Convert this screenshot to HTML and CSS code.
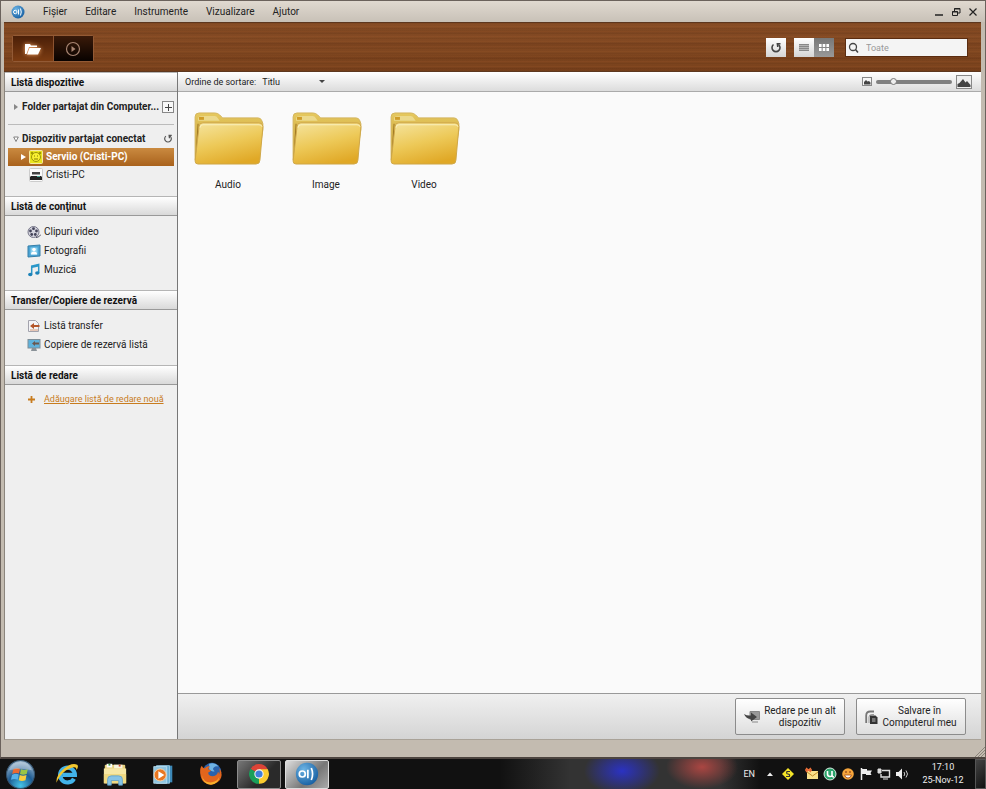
FILE: index.html
```
<!DOCTYPE html>
<html lang="ro">
<head>
    <meta charset="UTF-8">
    <meta name="viewport" content="width=device-width, initial-scale=1.0">
    <title>AllShare</title>
    <link rel="stylesheet" href="styles.css">
</head>
<body>
    <svg class="defs" aria-hidden="true">
        <defs>
            <linearGradient id="folderFront" x1="0.2" y1="0" x2="0.6" y2="1">
                <stop offset="0" stop-color="#f4e196"/>
                <stop offset="0.5" stop-color="#edc958"/>
                <stop offset="1" stop-color="#e0a826"/>
            </linearGradient>
            <linearGradient id="folderBack" x1="0" y1="0" x2="0" y2="1">
                <stop offset="0" stop-color="#e6c95f"/>
                <stop offset="1" stop-color="#bd912b"/>
            </linearGradient>
            <radialGradient id="orb" cx="0.5" cy="0.9" r="0.9">
                <stop offset="0" stop-color="#45c4e8"/>
                <stop offset="0.5" stop-color="#1e5c93"/>
                <stop offset="1" stop-color="#a9bfd2"/>
            </radialGradient>
            <radialGradient id="appBlue" cx="0.35" cy="0.3" r="0.8">
                <stop offset="0" stop-color="#6db4e4"/>
                <stop offset="1" stop-color="#125a9e"/>
            </radialGradient>
            <symbol id="folder" viewBox="0 0 72 56">
                <path d="M2 50V6q0-4 4-4h16q3 0 5 2l3 3h36q3 0 4 3l1 3v6L66 52H6z" fill="url(#folderBack)" stroke="#d3b45c"/>
                <path d="M5 8q0-3 3-3h14q2 0 3 2l2 3h-22z" fill="#ecd98b"/>
                <rect x="6" y="6" width="5" height="3" fill="#cf9c26"/>
                <path d="M3 48L5 13" stroke="#9a7321" fill="none"/>
                <path d="M6 16q0-4 4-4h57q4 0 4 4l-3 34q0 4-4 4H5q-3 0-3-3z" fill="url(#folderFront)" stroke="#cfa748"/>
                <path d="M7 17q0-3 3-3h57q3 0 3 2" fill="none" stroke="#faf0bd"/>
            </symbol>
            <symbol id="app" viewBox="0 0 28 28">
                <circle cx="14" cy="14" r="13" fill="url(#appBlue)"/>
                <circle cx="8.500" cy="14" r="3.500" fill="none" stroke="#fff" stroke-width="2"/>
                <path d="M15 9v10M19 7q3 7 0 14" fill="none" stroke="#fff" stroke-width="2"/>
            </symbol>
        </defs>
    </svg>

    <div class="window">
        <header class="titlebar">
            <svg class="app-logo"><use href="#app"/></svg>
            <nav class="menu">
                <button>Fişier</button>
                <button>Editare</button>
                <button>Instrumente</button>
                <button>Vizualizare</button>
                <button>Ajutor</button>
            </nav>
            <div class="window-buttons">
                <button aria-label="Minimizare"><svg viewBox="0 0 10 10"><path d="M1 8h8" stroke="#222" stroke-width="1.500"/></svg></button>
                <button aria-label="Restaurare"><svg viewBox="0 0 10 10"><path d="M3.500 4V1.500h5.500V6H7M3 2h6" fill="none" stroke="#222"/><path d="M1.500 4.500h5V8.500h-5zM1 5h6" fill="none" stroke="#222"/></svg></button>
                <button aria-label="Închidere"><svg viewBox="0 0 10 10"><path d="M1.500 1.500l7 7M8.500 1.500l-7 7" stroke="#222" stroke-width="1.200"/></svg></button>
            </div>
        </header>

        <div class="toolbar">
            <div class="mode-switch">
                <button class="active" aria-label="Foldere">
                    <svg width="18" height="14" viewBox="0 0 18 14"><path d="M1 12V2h5l1 1.500h6V5H5L2.500 12z" fill="#fff"/><path d="M5.500 6H17l-3 6.500H3z" fill="#fff"/></svg>
                </button>
                <button aria-label="Redare">
                    <svg width="16" height="16" viewBox="0 0 16 16"><circle cx="8" cy="8" r="6.500" fill="none" stroke="#a98673" stroke-width="1.200"/><path d="M6.500 5v6l4-3z" fill="#a98673"/></svg>
                </button>
            </div>
            <button class="tool-btn" aria-label="Reîmprospătare">
                <svg width="12" height="12" viewBox="0 0 12 12"><path d="M3.500 2.500A4 4 0 1 0 8.500 2.500" fill="none" stroke="#444" stroke-width="1.600"/><path d="M6.500 1h4v1.500h-2V5H7z" fill="#444"/></svg>
            </button>
            <div class="view-switch">
                <button aria-label="Listă"><svg width="10" height="7" viewBox="0 0 10 7"><path d="M0 0h10v7H0z" fill="#b5b5b5"/><path d="M0 .5h10M0 2.500h10M0 4.500h10M0 6.500h10" stroke="#888"/></svg></button>
                <button class="active" aria-label="Pictograme"><svg width="10" height="7" viewBox="0 0 10 7"><path d="M0 0h2.600v3H0zM3.700 0h2.600v3H3.700zM7.400 0H10v3H7.400zM0 4h2.600v3H0zM3.700 4h2.600v3H3.700zM7.400 4H10v3H7.400z" fill="#fff"/></svg></button>
            </div>
            <label class="search">
                <svg width="12" height="12" viewBox="0 0 12 12"><circle cx="5" cy="5" r="3.500" fill="none" stroke="#444" stroke-width="1.300"/><path d="M7.500 7.500L10 10.500" stroke="#444" stroke-width="1.500"/></svg>
                <input type="text" placeholder="Toate" aria-label="Căutare">
            </label>
        </div>

        <div class="content">
            <aside class="sidebar">
                <h2>Listă dispozitive</h2>
                <div class="devices">
                    <div class="group">
                        <svg class="arrow" viewBox="0 0 6 8"><path d="M1 1l4 3-4 3z" fill="#888"/></svg>
                        <span>Folder partajat din Computer...</span>
                        <button class="add" aria-label="Adăugare folder"><svg width="7" height="7" viewBox="0 0 7 7"><path d="M3.500 0v7M0 3.500h7" stroke="#444"/></svg></button>
                    </div>
                    <hr>
                    <div class="group">
                        <svg class="arrow" viewBox="0 0 6 8"><path d="M.7 2h4.600L3 6.500z" fill="#fff" stroke="#666" stroke-width=".8"/></svg>
                        <span>Dispozitiv partajat conectat</span>
                        <button class="reload" aria-label="Reîmprospătare"><svg width="10" height="10" viewBox="0 0 12 12"><path d="M3.500 2.500A4 4 0 1 0 8.500 2.500" fill="none" stroke="#555" stroke-width="1.400"/><path d="M6.500 1h4v1.500h-2V5H7z" fill="#555"/></svg></button>
                    </div>
                    <a href="#" class="device selected">
                        <svg class="arrow" viewBox="0 0 6 8"><path d="M1 1l5 3-5 3z" fill="#fff"/></svg>
                        <svg class="icon" viewBox="0 0 14 14"><rect x=".5" y=".5" width="13" height="13" rx="1" fill="#e9e51d" stroke="#f6e8a0"/><circle cx="7" cy="7" r="4.500" fill="#f9f032" stroke="#9c950c"/><circle cx="3" cy="3" r="1.300" fill="#a39b00"/><circle cx="11" cy="3" r="1.300" fill="#a39b00"/><path d="M5 6h1M8 6h1M5 9h4" stroke="#857c00"/></svg>
                        <span>Serviio (Cristi-PC)</span>
                    </a>
                    <a href="#" class="device">
                        <svg class="arrow"></svg>
                        <svg class="icon" viewBox="0 0 14 14"><rect x=".5" y=".5" width="13" height="13" rx="1" fill="#fafafa" stroke="#ccc"/><path d="M3 4h8v2.500H3z" fill="#444"/><path d="M2 8h10l1 1v3H1V9z" fill="#222"/><path d="M8 8.500h3" stroke="#4a9"/></svg>
                        <span>Cristi-PC</span>
                    </a>
                </div>

                <h2>Listă de conţinut</h2>
                <ul>
                    <li><a href="#">
                        <svg class="icon" viewBox="0 0 14 14"><circle cx="6.500" cy="7" r="5.500" fill="#d5d5df" stroke="#77778a"/><circle cx="6.500" cy="3.700" r="1.400" fill="#44445a"/><circle cx="3.500" cy="6" r="1.400" fill="#44445a"/><circle cx="9.500" cy="6" r="1.400" fill="#44445a"/><circle cx="4.700" cy="9.500" r="1.400" fill="#44445a"/><circle cx="8.300" cy="9.500" r="1.400" fill="#44445a"/><path d="M9 12.500q3 0 5-3" stroke="#44445a" fill="none"/></svg>
                        Clipuri video</a></li>
                    <li><a href="#">
                        <svg class="icon" viewBox="0 0 14 14"><path d="M1 2l12-1v11l-12 1z" fill="#4ba3d3" stroke="#357fa9"/><path d="M3.500 3.500h7v7h-7z" fill="#8bd0ee"/><circle cx="7" cy="5.500" r="1.800" fill="#fff"/><path d="M4 10.500q0-3 3-3t3 3z" fill="#fff"/></svg>
                        Fotografii</a></li>
                    <li><a href="#">
                        <svg class="icon" viewBox="0 0 14 14"><path d="M4.700 11V3l7-1.500V10" fill="none" stroke="#2a97c8" stroke-width="1.500"/><path d="M4.700 4l7-1.500" stroke="#2a97c8" stroke-width="2"/><ellipse cx="3.300" cy="11.500" rx="2.200" ry="1.700" fill="#1c82b8"/><ellipse cx="10.300" cy="10" rx="2.200" ry="1.700" fill="#1c82b8"/></svg>
                        Muzică</a></li>
                </ul>

                <h2>Transfer/Copiere de rezervă</h2>
                <ul>
                    <li><a href="#">
                        <svg class="icon" viewBox="0 0 14 14"><path d="M1.500 1.500h7l3 3v8h-10z" fill="#f3f3f6" stroke="#a3a3ad"/><path d="M12.500 6H7V4L3 7l4 3V8h5.500z" fill="#b4562a"/><path d="M3 11h8" stroke="#d99a77"/></svg>
                        Listă transfer</a></li>
                    <li><a href="#">
                        <svg class="icon" viewBox="0 0 14 14"><rect x="1" y="1.500" width="12" height="8.500" fill="#5fb2dc" stroke="#7e8e98"/><path d="M4 13h6l-1-3H5z" fill="#8a9298"/><path d="M12 4.500H8V3L5 5.500l3 2.500V6.500h4z" fill="#6a5850"/></svg>
                        Copiere de rezervă listă</a></li>
                </ul>

                <h2>Listă de redare</h2>
                <ul>
                    <li><a href="#" class="new-playlist">
                        <svg class="plus" viewBox="0 0 7 7"><path d="M3.500 0v7M0 3.500h7" stroke="#c87c1e" stroke-width="1.800"/></svg>
                        <span>Adăugare listă de redare nouă</span></a></li>
                </ul>
            </aside>

            <main>
                <div class="sortbar">
                    <label for="sort">Ordine de sortare:</label>
                    <div class="select">
                        <select id="sort"><option>Titlu</option></select>
                    </div>
                    <div class="size">
                        <svg width="10" height="9" viewBox="0 0 10 9"><rect x=".5" y=".5" width="9" height="8" fill="#f6f6f6" stroke="#888"/><path d="M2 7.500V5l2-2 1.500 1.500L7 4l1.500 1.500v2z" fill="#444"/></svg>
                        <input type="range" min="0" max="100" value="20" aria-label="Dimensiune miniaturi">
                        <svg width="16" height="14" viewBox="0 0 16 14"><rect x=".5" y=".5" width="15" height="13" fill="#eee" stroke="#888"/><path d="M1.500 12V9l2-1L7 4l2.500 3.500L11 6l3.500 4v2z" fill="#444"/></svg>
                    </div>
                </div>

                <div class="folders">
                    <a href="#"><svg><use href="#folder"/></svg>Audio</a>
                    <a href="#"><svg><use href="#folder"/></svg>Image</a>
                    <a href="#"><svg><use href="#folder"/></svg>Video</a>
                </div>

                <footer>
                    <button>
                        <svg width="16" height="14" viewBox="0 0 16 14"><path d="M6 1.500h9.500v8H6zM8 12h6" fill="#999" stroke="#888"/><path d="M0 4q3 2 7 1.500V2.500L13 7l-6 4.500V9Q2 9 0 4z" fill="#444"/></svg>
                        <span>Redare pe un alt dispozitiv</span>
                    </button>
                    <button>
                        <svg width="13" height="14" viewBox="0 0 13 14"><path d="M1.200 13V5.500q0-4 4-4H9" fill="none" stroke="#777" stroke-width="1.800"/><path d="M4 13V7q0-2.500 3-2.500h2" fill="none" stroke="#999"/><path d="M5 5.500h5.500l2 2V14H5z" fill="#333"/><path d="M7 8h3.500v4H7z" fill="#777"/></svg>
                        <span>Salvare în Computerul meu</span>
                    </button>
                </footer>
            </main>
        </div>

        <div class="statusbar">
            <svg width="10" height="10" viewBox="0 0 10 10"><path d="M0 10L10 0M3 10l7-7M6 10l4-4" stroke="#8b857b"/></svg>
        </div>
    </div>

    <div class="taskbar">
        <button class="start" aria-label="Start">
            <svg viewBox="0 0 28 28"><circle cx="14" cy="14" r="13.500" fill="url(#orb)" stroke="#34536e"/><path d="M7 9q3-2 6.500-.5L12.500 13q-3-1-6.500.5z" fill="#ea6a32"/><path d="M14.500 9q3 1.500 6.500 0l-1 4.500q-3.500 1.500-6.500 0z" fill="#9ac545"/><path d="M5.800 14.500q3.500-2 6.500-.5l-1 5q-3-1.500-6.500 0z" fill="#57b1e8"/><path d="M13.300 14.500q3 1.500 6.500 0l-1 5q-3.500 1.500-6.500 0z" fill="#f9cd3c"/><path d="M3 10Q6 2 14 2t11 8q-11-3-22 0z" fill="#fff" opacity=".3"/></svg>
        </button>
        <button aria-label="Internet Explorer">
            <svg viewBox="0 0 28 28"><path d="M21.500 19A8 8 0 1 1 22.500 15H9" fill="none" stroke="#42b3ea" stroke-width="4.500"/><path d="M3 24Q1 17 10 9T25 4q2 2-1 6 1-4-4-3Q12 9 7 16T3 24z" fill="#f2c62e"/></svg>
        </button>
        <button aria-label="Explorer">
            <svg viewBox="0 0 28 28"><path d="M3 5q0-1 1-1h20q1 0 1 1v19H3z" fill="#e6cf7a"/><path d="M5 3h6v4H5z" fill="#fff"/><path d="M7 3h2v2H7z" fill="#3d9b4a"/><path d="M13 4h9v4h-9z" fill="#f7f3e0"/><path d="M18 4h2v2h-2z" fill="#d04a34"/><path d="M2 8h24v16H2z" fill="#f6e7a5"/><path d="M2 14h24v10H2z" fill="#efd982"/><path d="M6 26v-6q0-4 4-4h8q4 0 4 4v6h-4v-5h-8v5z" fill="#86c3e6" stroke="#5a9cc6" stroke-width=".8"/></svg>
        </button>
        <button aria-label="Media Player">
            <svg viewBox="0 0 28 28"><path d="M10 5h14v18H10z" fill="#3d89b8"/><path d="M7 5h14v19H7z" fill="#69aed3" stroke="#a7d5ec" stroke-width=".8"/><path d="M4 6h14v18H4z" fill="#8fc5e0" stroke="#c5e6f5" stroke-width=".8"/><circle cx="11" cy="15" r="6.500" fill="#e87722" stroke="#fbd3a9"/><path d="M9 11v8l6.500-4z" fill="#fff"/></svg>
        </button>
        <button aria-label="Firefox">
            <svg viewBox="0 0 28 28"><circle cx="15" cy="12" r="10" fill="#2b62ab"/><path d="M12 3q6-2 10 3-3-1-5 1t1 4q-4 1-6-2z" fill="#6fb3e3"/><path d="M4 5q1 2 3 3 3-3 6-2-2 1-2 3l3 1q-1 2-3 2.500 0 4 5 4 5-1 5.500-5 1.500 1 1 3 2-3 0-7 4 4 2.500 10T14 25.500Q5 25 3 17T4 5z" fill="#e3651c"/><path d="M4 15q2 9 11 8 6-1 8-6-1 8-9 8.500Q5 25 4 15z" fill="#f8b02b"/></svg>
        </button>
        <button class="open" aria-label="Chrome">
            <svg viewBox="0 0 28 28"><path d="M14 14L4 8.200A11.500 11.500 0 0 1 24 8.200z" fill="#dc4437"/><path d="M14 14L4 8.200A11.500 11.500 0 0 0 14 25.500z" fill="#1a9f5b"/><path d="M14 14l10-5.800A11.500 11.500 0 0 1 14 25.500l0-1z" fill="#fbcc30"/><path d="M14 8.500h10L19 16.500 14 25.500z" fill="#fbcc30"/><path d="M4 8.200L9 17l5-3z" fill="#1a9f5b"/><circle cx="14" cy="14" r="5.500" fill="#f3f3f3"/><circle cx="14" cy="14" r="4.200" fill="#3f7fdb"/></svg>
        </button>
        <button class="open current" aria-label="AllShare">
            <svg viewBox="0 0 28 28"><use href="#app"/></svg>
        </button>

        <div class="tray">
            <span class="lang">EN</span>
            <svg viewBox="0 0 14 14"><path d="M4 9l3-3.500L10 9z" fill="#eee"/></svg>
            <svg class="first" viewBox="0 0 14 14"><path d="M7 1l6 6-6 6-6-6z" fill="#f5e528"/><path d="M9 4.500H6q-1 2.500 1 2.500t1.500 2.500H5" fill="none" stroke="#333" stroke-width="1.200"/></svg>
            <svg viewBox="0 0 14 14"><path d="M2 4h11v8H2z" fill="#f7e08a"/><path d="M2 5l5.500 4L13 5" fill="none" stroke="#c28a2a"/><path d="M1 1l5 4M6 1L1 5M0 3h7" stroke="#ee7038" stroke-width="1.300"/></svg>
            <svg viewBox="0 0 14 14"><circle cx="7" cy="7" r="6" fill="#2ba36b" stroke="#d7efe3"/><path d="M4.500 4v3q0 2.500 2.500 2.500T9 7V4M9 8q0 2 2 2" fill="none" stroke="#fff" stroke-width="1.600"/></svg>
            <svg viewBox="0 0 14 14"><circle cx="7" cy="7" r="5.800" fill="#f6a63c"/><path d="M3.500 8h7q-1 3-3.500 3T3.500 8z" fill="#fff" stroke="#a04a18" stroke-width=".8"/><path d="M5 4v2M9 4v2" stroke="#7c2e11"/></svg>
            <svg viewBox="0 0 14 14"><path d="M2.500 1v12" stroke="#eee" stroke-width="1.500"/><path d="M3 2h5v1.500h5L11.500 6l1 2H7V7H3z" fill="#eee"/></svg>
            <svg viewBox="0 0 14 14"><path d="M5 3.500h7.500V10H4V7" fill="none" stroke="#ddd" stroke-width="1.400"/><path d="M1 2h3v4H1zM6 12h5" fill="#ddd" stroke="#ddd"/></svg>
            <svg viewBox="0 0 14 14"><path d="M1 5h2.500L7 1.500v11L3.500 9H1z" fill="#eee"/><path d="M9 5q1.500 2 0 4M11 3.500q3 3.500 0 7" fill="none" stroke="#ccc"/></svg>
            <div class="clock">17:10<br>25-Nov-12</div>
            <button class="show-desktop" aria-label="Afișare desktop"></button>
        </div>
    </div>
</body>
</html>
```
FILE: styles.css
```
* {
    box-sizing: border-box;
}
body {
    margin: 0;
    height: 100vh;
    display: flex;
    flex-direction: column;
    font-family: Roboto, "Noto Sans", sans-serif;
    font-size: 10px;
    line-height: 12px;
    color: #222;
    background: #111;
    overflow: hidden;
}
button, input, select {
    font: inherit;
    color: inherit;
    margin: 0;
    padding: 0;
    border: none;
    background: none;
}
a {
    color: inherit;
    text-decoration: none;
}
svg {
    display: block;
    flex: none;
}
.defs {
    position: absolute;
    width: 0;
    height: 0;
}

/* window */
.window {
    flex: 1;
    min-height: 0;
    display: flex;
    flex-direction: column;
    padding: 0 4px 0 3px;
    border: 1px solid #6b625c;
    border-bottom: 2px solid #4d4540;
    background: #c3bbb0;
}
.titlebar {
    display: flex;
    align-items: center;
    height: 21px;
    margin: 0 -4px 0 -3px;
    padding: 0 7px 0 10px;
    background: linear-gradient(#e0d9d0, #c8c1b7);
}
.app-logo {
    width: 14px;
    height: 14px;
}
.menu {
    display: flex;
    gap: 18px;
    margin-left: 18px;
    flex: 1;
}
.window-buttons {
    display: flex;
    gap: 7px;
}
.window-buttons svg {
    width: 10px;
    height: 10px;
}

/* wooden toolbar */
.toolbar {
    display: flex;
    align-items: center;
    height: 50px;
    padding: 3px 13px 2px 8px;
    border-top: 1px solid #5d371f;
    border-bottom: 1px solid #5d371f;
    background:
        repeating-linear-gradient(rgba(50, 20, 0, 0.08) 0 1px, transparent 1px 3px, rgba(180, 100, 50, 0.12) 3px 4px, transparent 4px 5px),
        repeating-linear-gradient(rgba(60, 20, 0, 0) 0 5px, rgba(60, 20, 0, 0.1) 8px 9px, rgba(60, 20, 0, 0) 13px),
        linear-gradient(#874d26, #7a421c);
}
.mode-switch {
    display: flex;
    width: 82px;
    height: 27px;
    margin: 2px auto 0 0;
    border: 1px solid #935a35;
    border-radius: 2px;
    background: #1f0d04;
}
.mode-switch button {
    flex: 1;
    display: flex;
    align-items: center;
    justify-content: center;
    background: linear-gradient(#3a1a09, #080200);
}
.mode-switch .active {
    background: linear-gradient(#4a1f08, #7c3c12);
    border-right: 1px solid #8c5330;
}
.mode-switch .active svg {
    filter: drop-shadow(0 0 2px #ffb070);
}
.tool-btn, .view-switch button {
    display: flex;
    align-items: center;
    justify-content: center;
    width: 20px;
    height: 19px;
    background: linear-gradient(#fff, #d5d5d5);
}
.view-switch {
    display: flex;
    margin: 0 11px 0 8px;
}
.view-switch .active {
    background: linear-gradient(#777, #999);
}
.search {
    display: flex;
    align-items: center;
    gap: 6px;
    width: 123px;
    height: 19px;
    padding: 0 2px;
    border: 1px solid #5a2c10;
    background: #f4f4f4;
}
.search input {
    flex: 1;
    min-width: 0;
    font-size: 9px;
    outline: none;
}
.search input::placeholder {
    color: #999;
}

/* content */
.content {
    flex: 1;
    min-height: 0;
    display: flex;
    border-left: 1px solid #8b857d;
    border-bottom: 1px solid #a9a298;
}
.sidebar {
    width: 173px;
    border-right: 1px solid #777;
    background: #efefef;
}
.sidebar h2 {
    display: flex;
    align-items: center;
    height: 20px;
    margin: 0;
    padding: 1px 6px 0;
    font-size: 10px;
    font-weight: 700;
    line-height: 12px;
    color: #111;
    border-top: 1px solid #b5b5b5;
    border-bottom: 1px solid #999;
    background: linear-gradient(#fff, #d9d9d9);
}
.devices {
    padding: 6px 3px 12px;
}
.devices hr {
    margin: 8px 0 5px;
    border: none;
    border-top: 1px solid #bbb;
}
.group, .device {
    display: flex;
    align-items: center;
    height: 18px;
}
.group {
    padding-left: 5px;
    font-weight: 700;
}
.group span {
    flex: 1;
    min-width: 0;
    margin-left: 3px;
    white-space: nowrap;
}
.arrow {
    width: 6px;
    height: 8px;
}
.icon {
    width: 14px;
    height: 14px;
}
.add {
    display: flex;
    align-items: center;
    justify-content: center;
    width: 12px;
    height: 12px;
    border: 1px solid #888;
    background: #f8f8f8;
}
.reload {
    margin-right: 1px;
}
.device {
    gap: 3px;
    padding-left: 12px;
}
.selected {
    color: #fff;
    font-weight: 700;
    background: linear-gradient(#ca8a40, #a9621c);
}
.sidebar ul {
    margin: 0;
    padding: 6px 0 11px 22px;
    list-style: none;
}
.sidebar li a {
    display: flex;
    align-items: center;
    gap: 3px;
    height: 19px;
}
.sidebar .new-playlist {
    gap: 9px;
    height: 16px;
    padding-left: 1px;
    font-size: 9px;
    color: #c87c1e;
}
.new-playlist span {
    text-decoration: underline;
}
.plus {
    width: 7px;
    height: 7px;
}

main {
    flex: 1;
    min-width: 0;
    display: flex;
    flex-direction: column;
    background: #fafafa;
}
.sortbar {
    display: flex;
    align-items: center;
    height: 20px;
    padding: 0 9px 0 7px;
    font-size: 9px;
    border-bottom: 1px solid #aaa;
    background: linear-gradient(#fff, #dcdcdc);
}
.select {
    display: flex;
    align-items: center;
    margin-left: 6px;
}
.select select {
    width: 57px;
    appearance: none;
}
.select::after {
    content: "";
    border: 3px solid transparent;
    border-top-color: #444;
    border-bottom: none;
}
.size {
    display: flex;
    align-items: center;
    gap: 4px;
    margin-left: auto;
}
.size input {
    width: 76px;
    height: 8px;
    appearance: none;
}
.size input::-webkit-slider-runnable-track {
    height: 4px;
    border-radius: 2px;
    background: #808080;
}
.size input::-webkit-slider-thumb {
    appearance: none;
    width: 7px;
    height: 7px;
    margin-top: -2px;
    border: 1px solid #777;
    border-radius: 50%;
    background: #eee;
}
.folders {
    flex: 1;
    display: grid;
    grid-template-columns: repeat(auto-fill, 98px);
    align-content: start;
    padding: 19px 1px;
}
.folders a {
    display: flex;
    flex-direction: column;
    align-items: center;
    gap: 13px;
}
.folders svg {
    width: 71px;
    height: 55px;
}
footer {
    display: flex;
    align-items: center;
    justify-content: flex-end;
    gap: 11px;
    height: 46px;
    padding-right: 15px;
    border-top: 1px solid #999;
    background: linear-gradient(#f0f0f0, #d4d4d4);
}
footer button {
    display: flex;
    align-items: center;
    justify-content: center;
    gap: 4px;
    width: 110px;
    height: 37px;
    padding: 0 8px;
    border: 1px solid #8c8c8c;
    border-radius: 2px;
    background: linear-gradient(#fff, #dedede);
}
.statusbar {
    display: flex;
    align-items: flex-end;
    justify-content: flex-end;
    height: 17px;
    margin-right: -4px;
}

/* taskbar */
.taskbar {
    display: flex;
    align-items: center;
    gap: 4px;
    height: 30px;
    color: #eee;
    background:
        radial-gradient(ellipse 38px 24px at 622px 12px, rgba(42, 50, 210, 0.9), transparent),
        radial-gradient(ellipse 36px 22px at 702px 8px, rgba(200, 75, 70, 0.8), transparent),
        linear-gradient(90deg, #111 0 500px, #333 570px 720px, #111 760px);
}
.taskbar > button {
    display: flex;
    align-items: center;
    justify-content: center;
    width: 44px;
    height: 29px;
}
.taskbar > button svg {
    width: 26px;
    height: 26px;
}
.taskbar .start {
    width: 41px;
}
.taskbar .start svg {
    width: 29px;
    height: 29px;
}
.taskbar .open {
    border: 1px solid #8d8d8d;
    border-radius: 2px;
    background: linear-gradient(135deg, #777, #2a2a2a 60%);
}
.taskbar .open svg {
    width: 24px;
    height: 24px;
}
.taskbar .current {
    border-color: #ddd;
    background: linear-gradient(135deg, #ddd, #777 60%, #aaa);
}
.tray {
    display: flex;
    align-items: center;
    height: 100%;
    margin-left: auto;
}
.tray svg {
    width: 14px;
    height: 14px;
    margin: 0 2px;
}
.tray .first {
    margin-right: 8px;
}
.lang {
    margin-right: 6px;
    font-size: 9px;
}
.clock {
    width: 64px;
    font-size: 9px;
    line-height: 13px;
    text-align: center;
}
.show-desktop {
    width: 11px;
    height: 100%;
    border: 1px solid #555;
    background: linear-gradient(135deg, #444, #111);
}
```
